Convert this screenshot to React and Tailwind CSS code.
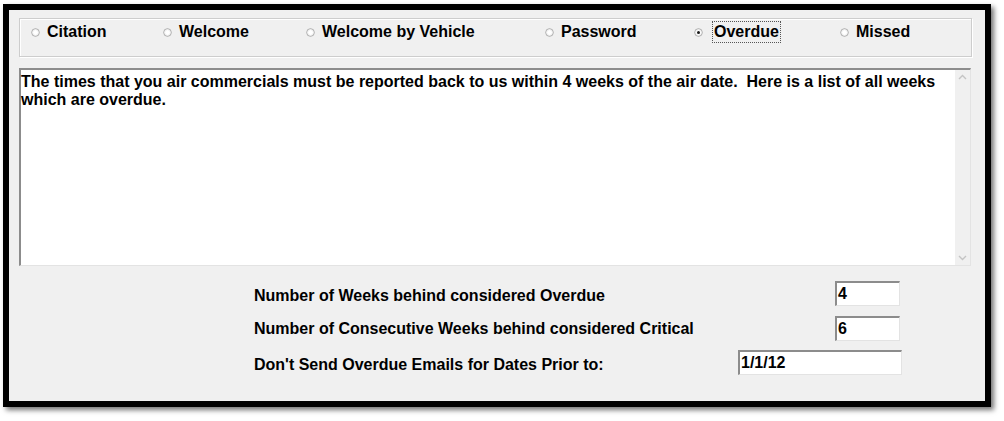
import React from "react";

const font = { fontFamily: '"Liberation Sans", Arial, sans-serif' };

const Radio = ({ checked }) => (
  <svg width="9" height="9" viewBox="0 0 9 9" className="shrink-0">
    <circle cx="4.5" cy="4.5" r="3.8" fill="#ffffff" stroke="#a0a0a0" strokeWidth="0.9" />
    <circle cx="4.5" cy="4.5" r="2.9" fill="none" stroke="#e2e2e2" strokeWidth="0.7" />
    {checked && <circle cx="4.5" cy="4.5" r="1.5" fill="#1a1a1a" />}
  </svg>
);

const options = [
  { label: "Citation", w: "w-[132px]" },
  { label: "Welcome", w: "w-[143px]" },
  { label: "Welcome by Vehicle", w: "w-[239px]" },
  { label: "Password", w: "w-[149px]" },
  { label: "Overdue", w: "w-[146px]", checked: true },
  { label: "Missed", w: "w-[110px]" },
];

const Field = ({ value, w }) => (
  <div className={`${w} h-[25px] bg-white border-t-2 border-l-2 border-t-[#8c8c8c] border-l-[#8c8c8c] border-r border-b border-r-[#e3e3e3] border-b-[#e3e3e3] flex items-center pl-[1px] text-[16px] font-bold text-black leading-none`}>
    {value}
  </div>
);

export default function App() {
  return (
    <div className="w-[1004px] h-[421px] bg-white pl-[3px] pt-[4px]" style={font}>
      <div className="w-[988px] h-[403px] border-[6px] border-black bg-[#f0f0f0] shadow-[3px_3px_5px_rgba(0,0,0,0.55)] pl-[10px] pt-[8px]">
        {/* option group */}
        <div className="w-[953px] h-[39px] border border-[#cdcdcd] shadow-[inset_1px_1px_0_#ffffff,1px_1px_0_#ffffff] flex items-start pl-[11px] pt-[2px]">
          {options.map((o) => (
            <div key={o.label} className={`${o.w} h-[22px] flex items-center`}>
              <Radio checked={o.checked} />
              {o.checked ? (
                <span className="ml-[9px] px-[1px] py-[1px] border border-dotted border-[#555] text-[16px] font-bold text-black leading-[18px]">
                  {o.label}
                </span>
              ) : (
                <span className="ml-[7px] text-[16px] font-bold text-black leading-[18px]">{o.label}</span>
              )}
            </div>
          ))}
        </div>

        {/* message box */}
        <div className="mt-[11px] w-[952px] h-[198px] bg-white border-t-2 border-l-2 border-t-[#8c8c8c] border-l-[#8c8c8c] border-r border-b border-r-[#e3e3e3] border-b-[#e3e3e3] flex">
          <div className="flex-1 pt-[3px] text-[16px] font-bold text-black leading-[18px] whitespace-pre">
            {"The times that you air commercials must be reported back to us within 4 weeks of the air date.  Here is a list of all weeks\nwhich are overdue."}
          </div>
          <div className="w-[15px] bg-[#f0f0f0] flex flex-col justify-between items-center py-[4px]">
            <svg width="9" height="6" viewBox="0 0 9 6">
              <path d="M1 5 L4.5 1.5 L8 5" fill="none" stroke="#c4c4c4" strokeWidth="1.4" />
            </svg>
            <svg width="9" height="6" viewBox="0 0 9 6">
              <path d="M1 1 L4.5 4.5 L8 1" fill="none" stroke="#c4c4c4" strokeWidth="1.4" />
            </svg>
          </div>
        </div>

        {/* settings */}
        <div className="mt-[15px] pl-[235px] flex flex-col">
          <div className="flex items-center h-[25px]">
            <span className="w-[581px] pt-[5px] text-[16px] font-bold text-black">Number of Weeks behind considered Overdue</span>
            <Field value="4" w="w-[65px]" />
          </div>
          <div className="flex items-center h-[25px] mt-[10px]">
            <span className="w-[581px] text-[16px] font-bold text-black">Number of Consecutive Weeks behind considered Critical</span>
            <Field value="6" w="w-[65px]" />
          </div>
          <div className="flex items-center h-[25px] mt-[9px]">
            <span className="w-[484px] pt-[4px] text-[16px] font-bold text-black">Don't Send Overdue Emails for Dates Prior to:</span>
            <Field value="1/1/12" w="w-[164px]" />
          </div>
        </div>
      </div>
    </div>
  );
}
